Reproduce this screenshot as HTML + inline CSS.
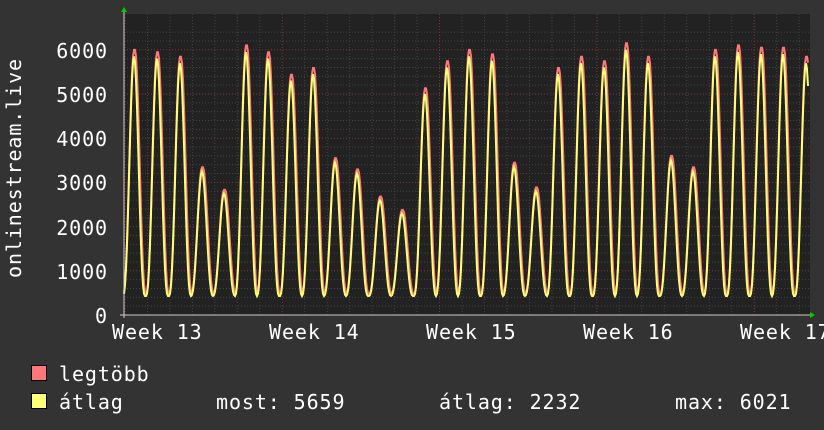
<!DOCTYPE html>
<html><head><meta charset="utf-8"><style>
body{margin:0;background:#333;width:824px;height:430px;overflow:hidden}
svg{display:block}
text{font-family:"DejaVu Sans Mono","Liberation Mono",monospace;fill:#fff;letter-spacing:0.9px}
</style></head><body>
<svg id="s" width="824" height="430" xmlns="http://www.w3.org/2000/svg">
<rect width="824" height="430" fill="#333"/>
<rect x="124" y="14" width="686" height="301" fill="#222"/>
<g id="grid"></g>
<polyline id="mx" fill="none" stroke="#ff7777" stroke-width="2"/>
<polyline id="av" fill="none" stroke="#ffff77" stroke-width="2"/>
<line x1="124" y1="10" x2="124" y2="318" stroke="#ccc" stroke-width="1"/>
<line x1="120" y1="315" x2="812" y2="315" stroke="#ccc" stroke-width="1"/>
<polygon points="121,12 127,12 124,7" fill="#0c0"/>
<polygon points="810,312 810,318 815,315" fill="#0c0"/>
<g font-size="20" text-anchor="end">
<text x="108" y="58">6000</text><text x="108" y="102">5000</text><text x="108" y="146">4000</text>
<text x="108" y="190">3000</text><text x="108" y="235">2000</text><text x="108" y="279">1000</text>
<text x="108" y="323">0</text></g>
<text transform="translate(21,168) rotate(-90)" font-size="20" text-anchor="middle">onlinestream.live</text>
<g font-size="20">
<text x="112" y="339">Week 13</text><text x="269" y="339">Week 14</text><text x="426" y="339">Week 15</text>
<text x="583" y="339">Week 16</text><text x="740" y="339">Week 17</text></g>
<rect x="31.5" y="365.5" width="15" height="15" fill="#ff7777" stroke="#000"/>
<rect x="31.5" y="393.5" width="15" height="15" fill="#ffff77" stroke="#000"/>
<g font-size="20">
<text x="59" y="381">legtöbb</text>
<text x="59" y="409">átlag</text>
<text x="216" y="409">most: 5659</text>
<text x="439" y="409">átlag: 2232</text>
<text x="675" y="409">max: 6021</text></g>
</svg>
<script>
var g=document.getElementById('grid'),h='';
for(var v=200;v<=6400;v+=200){var y=315-v*0.0442;if(y<14)break;
h+='<line x1="124" x2="810" y1="'+y+'" y2="'+y+'" stroke="'+(v%1000==0?'#7a3a3a':'#444')+'" stroke-dasharray="1,2"/>';}
for(var d=0;d<31;d++){var x=125+d*22.47;h+='<line y1="14" y2="315" x1="'+x+'" x2="'+x+'" stroke="'+(d%7==0?'#7a3a3a':'#444')+'" stroke-dasharray="1,2"/>';}
g.innerHTML=h;
var pk=[[134,5850],[157,5800],[180,5700],[202,3250],[224,2750],[246,5950],[268,5800],[291,5300],[313,5450],[335,3450],[357,3200],[380,2600],[402,2300],[425,5000],[447,5600],[469,5850],[492,5750],[514,3350],[536,2800],[558,5450],[581,5700],[604,5600],[626,6000],[648,5700],[671,3500],[693,3250],[715,5850],[738,5950],[761,5900],[783,5900],[806,5700]];
function val(x){var b=430;for(var i=0;i<pk.length;i++){var dx=x-pk[i][0];if(Math.abs(dx)<11.2){var c=(1+Math.cos(Math.PI*dx/11.2))/2;c=Math.pow(c,1.3);return b+(pk[i][1]-b)*c;}}return b;}
var a='',m='';
for(var x=124;x<=808;x++){var v=val(x),w=val(x-1);var vm=Math.max(v,w)*1.02+30;
a+=x+','+(315-v*0.0442).toFixed(1)+' ';m+=x+','+(315-vm*0.0442).toFixed(1)+' ';}
document.getElementById('av').setAttribute('points',a);
document.getElementById('mx').setAttribute('points',m);
</script>
</body></html>
